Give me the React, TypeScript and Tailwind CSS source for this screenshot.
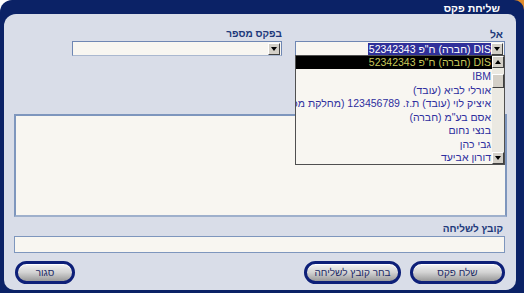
import React from "react";

const ITEMS = [
  "IBM",
  "אורלי לביא (עובד)",
  "איציק לוי (עובד) ת.ז. 123456789 (מחלקת מכירות)",
  "אסם בע\"מ (חברה)",
  "בנצי נחום",
  "גבי כהן",
  "דורון אביעד",
];

function ArrowBtn({ up = false }: { up?: boolean }) {
  return (
    <div className="w-[12px] h-[12px] bg-[#d4d0c8] border border-t-white border-l-white border-r-[#404040] border-b-[#404040] flex items-center justify-center shrink-0">
      <svg width="6" height="4" viewBox="0 0 6 4">
        {up ? <path d="M0 4 L3 0 L6 4 Z" fill="#000" /> : <path d="M0 0 L6 0 L3 4 Z" fill="#000" />}
      </svg>
    </div>
  );
}

function PillButton({ label, className }: { label: string; className: string }) {
  return (
    <button
      className={
        "h-[23px] rounded-full border-[3px] border-[#0d1f78] bg-gradient-to-b from-[#f4f4f4] via-[#d2d2d2] to-[#9a9a9a] text-[#1c2a66] text-[10px] leading-none shadow-[inset_0_1px_0_#fff] " +
        className
      }
    >
      {label}
    </button>
  );
}

export default function App() {
  return (
    <div
      dir="rtl"
      className="w-[524px] h-[293px] bg-white relative overflow-hidden"
      style={{ fontFamily: '"Liberation Sans", Arial, sans-serif' }}
    >
      <div className="absolute top-0 right-0 w-[10px] h-[10px] bg-[#e08a2a]" />
      <div className="relative w-full h-full bg-[#0b2266] rounded-tl-[12px] rounded-tr-[10px] flex flex-col">
        <div className="h-[14px] pr-[24px] text-white font-bold text-[10.5px] leading-[16px]">שליחת פקס</div>

        <div className="flex-1 ml-[4px] mr-[8px] mb-[3px] bg-[#d9dde8] rounded-tl-[12px] rounded-tr-[8px] rounded-bl-[10px] rounded-br-[10px] relative flex flex-col pr-[11px] pl-[11px]">
          <div className="flex gap-[13px] mt-[14px]">
            <div className="w-[210px] flex flex-col">
              <div className="text-[10.5px] leading-[12px] text-[#20387a] font-bold h-[12px] pr-[2px]">אל</div>
              <div className="mt-[1px] h-[15px] bg-[#f8f6f1] border border-[#6f87b3] border-b-[#aab8d0] flex items-center pr-[1px]">
                <ArrowBtn />
                <span className="bg-[#30309a] text-white text-[10.5px] leading-[12px] pl-[1px] whitespace-nowrap">DIS (חברה) ח"פ 52342343</span>
              </div>
            </div>
            <div className="w-[210px] flex flex-col">
              <div className="text-[10px] leading-[12px] text-[#20387a] font-bold h-[12px]">בפקס מספר</div>
              <div className="mt-[1px] h-[15px] bg-[#f8f6f1] border border-[#6f87b3] border-b-[#aab8d0] flex items-center pr-[1px]">
                <ArrowBtn />
              </div>
            </div>
          </div>

          <div className="mt-[58px] mr-[-2px] ml-[-1px] h-[103px] bg-[#f8f6f1] border-2 border-[#7e96bd] border-b-[#9fb0cc]" />

          <div className="mt-[6px] text-[10px] leading-[12px] text-[#20387a] font-bold pr-[2px]">קובץ לשליחה</div>
          <div className="mt-[1px] h-[17px] bg-[#f8f6f1] border border-[#7e96bd] ml-[-1px]" />

          <div className="mt-[8px] flex">
            <PillButton label="שלח פקס" className="w-[95px] ml-[9px]" />
            <PillButton label="בחר קובץ לשליחה" className="w-[97px] px-[2px]" />
            <div className="flex-1" />
            <PillButton label="סגור" className="w-[60px] mr-auto" />
          </div>

          <div className="absolute top-[41px] right-[11px] w-[210px] h-[110px] bg-[#f8f6f1] border border-[#505050] flex overflow-hidden">
            <div className="w-[12px] flex flex-col bg-[#ebe9e2] shrink-0">
              <ArrowBtn up />
              <div className="flex-1 relative">
                <div className="absolute top-[6px] left-0 w-[12px] h-[14px] bg-[#d4d0c8] border border-t-white border-l-white border-r-[#404040] border-b-[#404040]" />
              </div>
              <ArrowBtn />
            </div>
            <div className="flex-1 min-w-0 flex flex-col">
              <div className="h-[13px] bg-black text-[#c9c85a] text-[10.5px] leading-[13px] pr-[1px] whitespace-nowrap">DIS (חברה) ח"פ 52342343</div>
              {ITEMS.map((t) => (
                <div key={t} className="h-[13.6px] text-[#2e2e9e] text-[10.5px] leading-[14px] pr-[1px] whitespace-nowrap overflow-hidden">
                  {t}
                </div>
              ))}
            </div>
          </div>
        </div>
      </div>
    </div>
  );
}
